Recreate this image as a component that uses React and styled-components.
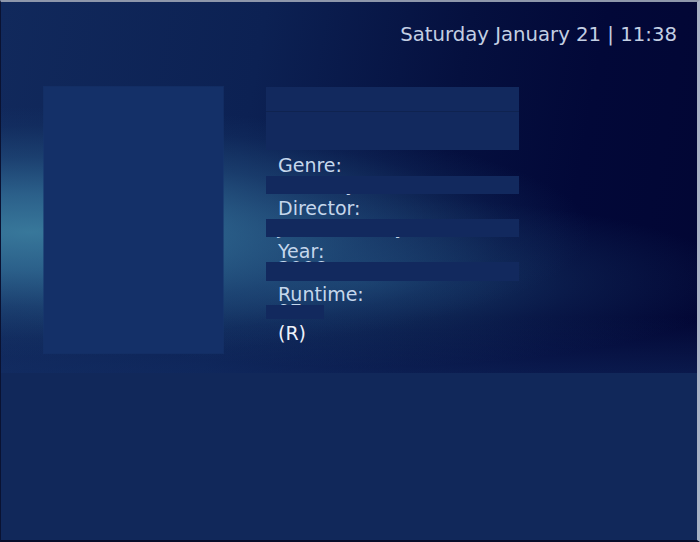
import React from "react";
import styled, { createGlobalStyle } from "styled-components";

const GlobalStyle = createGlobalStyle`
  html, body {
    margin: 0;
    padding: 0;
    background: #ffffff;
  }
  body {
    font-family: "DejaVu Sans", Verdana, sans-serif;
  }
`;

const Frame = styled.div`
  width: 700px;
  height: 542px;
  box-sizing: border-box;
  border-top: 2px solid #8e97ab;
  border-left: 1px solid #0a1232;
  border-right: 3px solid #a9b3c6;
  border-bottom: 2px solid #070d2a;
  display: flex;
  flex-direction: column;
  overflow: hidden;
`;

const Stage = styled.div`
  height: 371px;
  box-sizing: border-box;
  padding: 21px 20px 0 43px;
  display: flex;
  flex-direction: column;
  background:
    radial-gradient(ellipse 560px 125px at 30px 230px,
      rgba(58, 124, 158, 0.95) 0%,
      rgba(50, 110, 150, 0.8) 30%,
      rgba(38, 86, 132, 0.5) 60%,
      rgba(26, 62, 112, 0.2) 85%,
      rgba(20, 50, 100, 0) 100%),
    radial-gradient(ellipse 380px 85px at 360px 280px,
      rgba(38, 92, 136, 0.55) 0%,
      rgba(30, 72, 118, 0.25) 60%,
      rgba(30, 70, 115, 0) 100%),
    linear-gradient(180deg, rgba(0, 0, 0, 0) 85%, rgba(20, 48, 104, 0.45) 100%),
    linear-gradient(100deg, #11295c 0%, #0c2153 35%, #05103f 62%, #020838 80%, #020634 100%);
`;

const Clock = styled.div`
  align-self: flex-end;
  font-size: 19.7px;
  line-height: 24px;
  color: #c3cfe3;
`;

const Content = styled.div`
  margin-top: 40px;
  display: flex;
  gap: 43px;
  align-items: flex-start;
`;

const Poster = styled.div`
  width: 179px;
  height: 266px;
  background: #143068;
  box-shadow: 0 0 0 1px rgba(22, 52, 108, 0.6);
`;

const Details = styled.div`
  width: 253px;
  display: flex;
  flex-direction: column;
`;

const TitleBar = styled.div`
  height: ${p => p.h}px;
  background: #12295e;
  border-top: ${p => (p.divided ? "1px solid #0f2350" : "none")};
  box-sizing: border-box;
`;

const Fields = styled.div`
  margin-top: 6px;
  display: flex;
  flex-direction: column;
`;

const Label = styled.div`
  padding-left: 12px;
  font-size: 19px;
  line-height: 18px;
  color: #c5d7ec;
`;

const ValueSlot = styled.div`
  position: relative;
  height: ${p => p.h}px;
`;

const ValueText = styled.div`
  padding-left: 12px;
  margin-top: ${p => p.drop}px;
  font-size: 19px;
  line-height: 14px;
  color: #c5d7ec;
  white-space: nowrap;
`;

const Mask = styled.div`
  position: absolute;
  top: 2px;
  left: 0;
  width: ${p => p.w}px;
  height: ${p => p.bh}px;
  background: #12295e;
`;

const Rating = styled.div`
  padding-left: 12px;
  font-size: 19px;
  line-height: 18px;
  color: #eef2fa;
`;

const Shelf = styled.div`
  flex: 1;
  background: #11285a;
`;

const fields = [
  { label: "Genre:", value: "Comedy, Drama", h: 25, bh: 18, w: 253, drop: 3 },
  { label: "Director:", value: "Jonathan Dayton", h: 25, bh: 18, w: 253, drop: 3 },
  { label: "Year:", value: "2006", h: 25, bh: 19, w: 253, drop: 1 },
  { label: "Runtime:", value: "97", h: 21, bh: 14, w: 58, drop: 1 },
];

export default function App() {
  return (
    <>
      <GlobalStyle />
      <Frame>
        <Stage>
          <Clock>Saturday January 21 | 11:38</Clock>
          <Content>
            <Poster />
            <Details>
              <TitleBar h={24} />
              <TitleBar h={39} divided />
              <Fields>
                {fields.map(f => (
                  <React.Fragment key={f.label}>
                    <Label>{f.label}</Label>
                    <ValueSlot h={f.h}>
                      <ValueText drop={f.drop}>{f.value}</ValueText>
                      <Mask w={f.w} bh={f.bh} />
                    </ValueSlot>
                  </React.Fragment>
                ))}
                <Rating>(R)</Rating>
              </Fields>
            </Details>
          </Content>
        </Stage>
        <Shelf />
      </Frame>
    </>
  );
}
